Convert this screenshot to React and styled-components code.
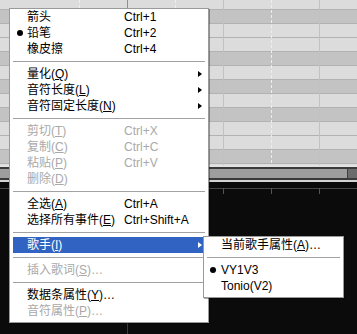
import React from "react";
import styled, { createGlobalStyle } from "styled-components";

const Global = createGlobalStyle`
  html, body { margin: 0; padding: 0; background: #0b0b0b; }
  body { font-family: "Liberation Sans", "Noto Sans CJK SC", sans-serif; }
`;

const Page = styled.div`
  position: relative;
  width: 357px;
  height: 334px;
  overflow: hidden;
  display: flex;
  flex-direction: column;
  background: #0b0b0b;
`;

const Roll = styled.div`
  position: relative;
  height: 165px;
  display: flex;
  flex-direction: column;
  flex: none;
`;

const KeyRow = styled.div`
  box-sizing: border-box;
  height: ${(p) => p.$h}px;
  flex: none;
  background: ${(p) => (p.$dark ? "#c3c3c3" : "#dcdcdc")};
  border-top: ${(p) => (p.$first ? "none" : "1px solid #b2b2b2")};
`;

const VLine = styled.div`
  position: absolute;
  top: 0;
  bottom: 0;
  width: 1px;
  ${(p) =>
    p.$kind === "measure"
      ? "background: #8e8e8e;"
      : p.$kind === "beat"
      ? "background: #c6c69e;"
      : "background: repeating-linear-gradient(to bottom, #eeeeee 0 3px, transparent 3px 5px);"}
`;

const Scroll = styled.div`
  flex: none;
  display: flex;
  flex-direction: column;
`;

const ScrollEdge = styled.div`
  height: 2px;
  background: ${(p) => p.$c};
`;

const Track = styled.div`
  box-sizing: border-box;
  height: 13px;
  display: flex;
  border-top: 2px solid #3a3a3a;
  border-bottom: 2px solid #3a3a3a;
`;

const Thumb = styled.div`
  flex: 1;
  background: #9e9e9e;
`;

const TrackEnd = styled.div`
  width: 9px;
  background: #6c6c6c;
  border-left: 1px solid #404040;
`;

const Dark = styled.div`
  position: relative;
  flex: 1;
  background: #0b0b0b;
`;

const Ruler = styled.div`
  position: absolute;
  left: 0;
  right: 0;
  top: 6px;
  height: 1px;
  background: #474747;
`;

const Tick = styled.div`
  position: absolute;
  top: ${(p) => (p.$full ? 0 : 6)}px;
  ${(p) => (p.$full ? "bottom: 0;" : "height: 6px;")}
  width: 1px;
  background: ${(p) => (p.$full ? "#3a3a3a" : "#555555")};
`;

const Menu = styled.div`
  position: absolute;
  box-sizing: border-box;
  left: ${(p) => p.$x}px;
  top: ${(p) => p.$y}px;
  width: ${(p) => p.$w}px;
  background: #ffffff;
  border: 1px solid #9a9a9a;
  box-shadow: 1px 1px 0 rgba(0, 0, 0, 0.35);
  padding: 0 0 3px 0;
  display: flex;
  flex-direction: column;
  font-size: 12px;
  color: #000;
`;

const Item = styled.div`
  height: 16px;
  margin: 0 3px;
  display: flex;
  align-items: center;
  line-height: 16px;
  white-space: nowrap;
  color: ${(p) => (p.$active ? "#ffffff" : p.$disabled ? "#a9a9a9" : "#000000")};
  background: ${(p) => (p.$active ? "#3164c2" : "transparent")};
`;

const Check = styled.span`
  width: 14px;
  flex: none;
  display: flex;
  justify-content: flex-start;
  padding-left: ${(p) => p.$pad}px;
  box-sizing: border-box;
`;

const Dot = styled.span`
  width: 6px;
  height: 6px;
  border-radius: 50%;
  background: currentColor;
`;

const Label = styled.span`
  width: ${(p) => (p.$w ? `${p.$w}px` : "auto")};
  flex: none;
`;

const Shortcut = styled.span`
  flex: 1;
`;

const Arrow = styled.span`
  width: 0;
  height: 0;
  margin-right: 3px;
  border-top: 3.5px solid transparent;
  border-bottom: 3.5px solid transparent;
  border-left: 4px solid currentColor;
`;

const Sep = styled.div`
  height: 9px;
  margin: 0 3px;
  display: flex;
  align-items: center;
  &::after {
    content: "";
    flex: 1;
    height: 1px;
    background: #a2a2a2;
  }
`;

const keyRows = [
  [9, false], [14, true], [14, false], [14, false], [14, true], [14, false],
  [14, true], [14, false], [14, true], [14, false], [14, false], [14, true], [2, false],
];

const vlines = [
  [79, "dash"], [127, "measure"], [175, "dash"], [223, "beat"], [271, "dash"], [319, "beat"],
];

const mainItems = [
  { t: "箭头", s: "Ctrl+1" },
  { t: "铅笔", s: "Ctrl+2", dot: true },
  { t: "橡皮擦", s: "Ctrl+4" },
  "sep",
  { t: "量化", m: "Q", arrow: true },
  { t: "音符长度", m: "L", arrow: true },
  { t: "音符固定长度", m: "N", arrow: true },
  "sep",
  { t: "剪切", m: "T", s: "Ctrl+X", dis: true },
  { t: "复制", m: "C", s: "Ctrl+C", dis: true },
  { t: "粘贴", m: "P", s: "Ctrl+V", dis: true },
  { t: "删除", m: "D", dis: true },
  "sep",
  { t: "全选", m: "A", s: "Ctrl+A" },
  { t: "选择所有事件", m: "E", s: "Ctrl+Shift+A" },
  "sep",
  { t: "歌手", m: "I", arrow: true, active: true },
  "sep",
  { t: "插入歌词", m: "S", dots: true, dis: true },
  "sep",
  { t: "数据条属性", m: "Y", dots: true },
  { t: "音符属性", m: "P", dots: true, dis: true },
];

const subItems = [
  { t: "当前歌手属性", m: "A", dots: true },
  "sep",
  { t: "VY1V3", dot: true },
  { t: "Tonio(V2)" },
];

function Entry({ it, labelW, pad }) {
  return (
    <Item $disabled={it.dis} $active={it.active}>
      <Check $pad={pad}>{it.dot && <Dot />}</Check>
      <Label $w={labelW}>
        {it.t}
        {it.m && (
          <>
            (<u>{it.m}</u>)
          </>
        )}
        {it.dots && "…"}
      </Label>
      <Shortcut>{it.s || ""}</Shortcut>
      {it.arrow && <Arrow />}
    </Item>
  );
}

export default function App() {
  return (
    <>
      <Global />
      <Page>
        <Roll>
          {keyRows.map(([h, d], i) => (
            <KeyRow key={i} $h={h} $dark={d} $first={i === 0} />
          ))}
          {vlines.map(([x, k]) => (
            <VLine key={x} $kind={k} style={{ left: x }} />
          ))}
        </Roll>
        <Scroll>
          <ScrollEdge $c="#e2e2e2" />
          <Track>
            <Thumb />
            <TrackEnd />
          </Track>
          <ScrollEdge $c="#d4d4d4" />
        </Scroll>
        <Dark>
          <Ruler />
          <Tick $full style={{ left: 127 }} />
          <Tick style={{ left: 223 }} />
          <Tick style={{ left: 271 }} />
          <Tick style={{ left: 319 }} />
        </Dark>

        <Menu $x={9} $y={8} $w={200}>
          {mainItems.map((it, i) =>
            it === "sep" ? <Sep key={i} /> : <Entry key={i} it={it} labelW={97} pad={4} />
          )}
        </Menu>

        <Menu $x={203} $y={236} $w={141}>
          {subItems.map((it, i) =>
            it === "sep" ? <Sep key={i} /> : <Entry key={i} it={it} pad={3} />
          )}
        </Menu>
      </Page>
    </>
  );
}
